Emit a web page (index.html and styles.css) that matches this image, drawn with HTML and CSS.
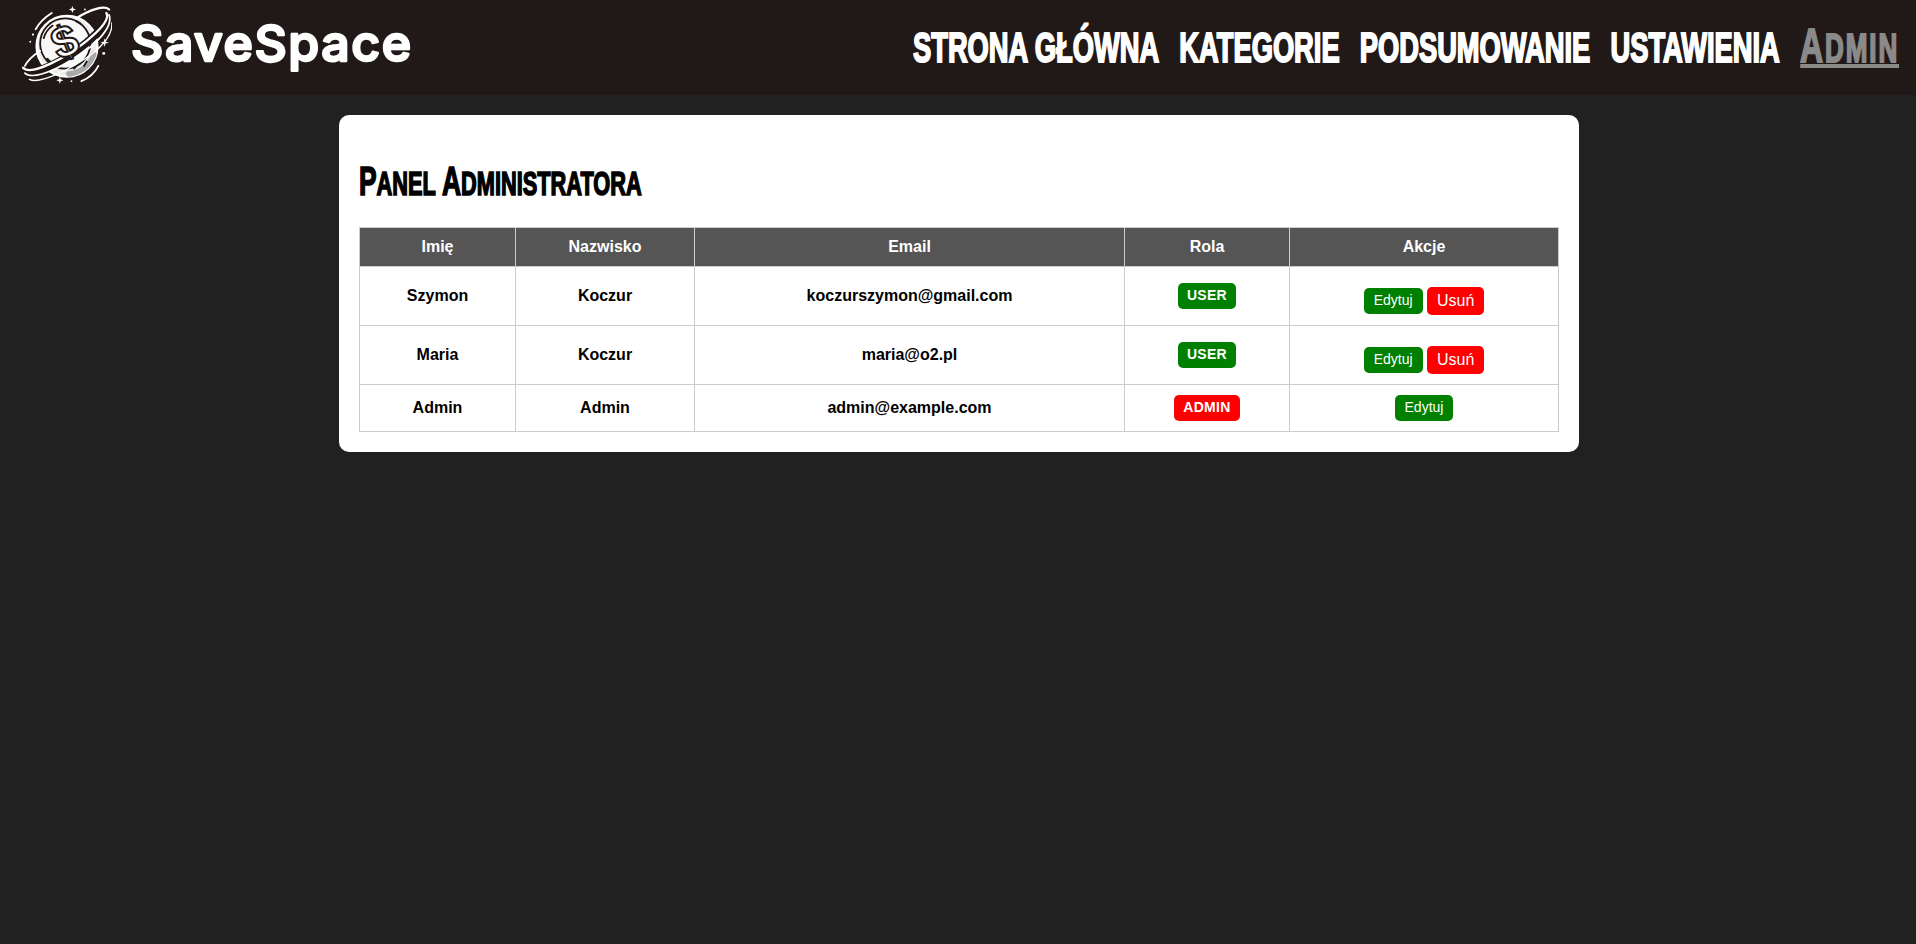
FILE: index.html
```html
<!DOCTYPE html>
<html lang="pl">
<head>
<meta charset="utf-8">
<title>SaveSpace</title>
<link rel="stylesheet" href="styles.css">
</head>
<body>
<header class="topbar">
  <a class="brand" href="#">
    <svg class="logo" viewBox="0 0 100 96" aria-hidden="true">
      <g fill="none" stroke="#fff" stroke-linecap="round">
        <circle cx="50" cy="46" r="34" fill="#ececec" stroke-width="2.5"/>
        <circle cx="48" cy="43" r="28" fill="#f8f8f8" stroke="#1f1716" stroke-width="2"/>
        <path d="M52 77a32 32 0 0 0 28-22" stroke="#a8a8a8" stroke-width="6"/>
        <path d="M58 71l5-6M69 68l3-5" stroke="#1f1716" stroke-width="2"/>
        <path d="M24 37a26 26 0 0 1 10-14M28 60l5 5M60 18l5 3" stroke="#1f1716" stroke-width="2"/>
        <path d="M2 72C12 82 50 60 72 42 88 28 98 18 94 9" stroke="#1f1716" stroke-width="9"/>
        <path d="M60 15C76 5 92 0 97 5" stroke-width="2.5"/>
        <path d="M1 70C10 80 50 58 72 40 88 27 98 16 94 9" stroke-width="2.6"/>
        <path d="M3 76C14 86 54 65 76 47 90 35 101 22 97 11" stroke-width="2"/>
        <path d="M8 83C20 89 56 71 80 53 92 43 101 31 100 20" stroke-width="1.5"/>
        <path d="M3 68C6 62 14 55 20 51" stroke-width="2"/>
        <path d="M15 27C19 20 25 14 33 9" stroke-width="2"/>
        <path d="M85 68C81 76 74 82 66 85" stroke-width="2"/>
      </g>
      <text class="logo-dollar" x="48" y="58" transform="rotate(-22 48 42)">$</text>
      <g fill="#fff">
        <path d="M56 1l1 3 3 1-3 1-1 3-1-3-3-1 3-1zM92 37l1 4 4 1-4 1-1 4-1-4-4-1 4-1zM42 80l1 3 3 1-3 1-1 3-1-3-3-1 3-1z"/>
        <circle cx="91" cy="54" r="1.6"/><circle cx="12" cy="33" r="1.2"/><circle cx="9" cy="41" r="1"/><circle cx="55" cy="85" r="1"/><circle cx="70" cy="5" r="1"/>
      </g>
    </svg>
    <svg class="brand-mark" viewBox="0 0 290 70" role="img" aria-label="SaveSpace">
      <text class="brand-name" x="2" y="48">SaveSpace</text>
    </svg>
  </a>
  <nav class="nav">
    <a href="#">Strona główna</a>
    <a href="#">Kategorie</a>
    <a href="#">Podsumowanie</a>
    <a href="#">Ustawienia</a>
    <a href="#" class="nav-active">Admin</a>
  </nav>
</header>
<main class="card">
  <h2 class="title"><span class="word">Panel</span> <span class="word">Administratora</span></h2>
  <table class="users">
    <colgroup>
      <col class="c1"><col class="c2"><col class="c3"><col class="c4"><col class="c5">
    </colgroup>
    <thead>
      <tr><th>Imię</th><th>Nazwisko</th><th>Email</th><th>Rola</th><th>Akcje</th></tr>
    </thead>
    <tbody>
      <tr class="tall">
        <td>Szymon</td><td>Koczur</td><td>koczurszymon@gmail.com</td>
        <td><span class="badge green">USER</span></td>
        <td class="actions"><a class="btn green" href="#">Edytuj</a> <button class="del" type="button">Usuń</button></td>
      </tr>
      <tr class="tall">
        <td>Maria</td><td>Koczur</td><td>maria@o2.pl</td>
        <td><span class="badge green">USER</span></td>
        <td class="actions"><a class="btn green" href="#">Edytuj</a> <button class="del" type="button">Usuń</button></td>
      </tr>
      <tr>
        <td>Admin</td><td>Admin</td><td>admin@example.com</td>
        <td><span class="badge red">ADMIN</span></td>
        <td><a class="btn green" href="#">Edytuj</a></td>
      </tr>
    </tbody>
  </table>
</main>
</body>
</html>
```
FILE: styles.css
```css
* { box-sizing: border-box; }
html, body { margin: 0; height: 100%; }
body {
  background: #212121;
  font-family: "Liberation Sans", Arial, sans-serif;
  color: #000;
}
a { text-decoration: none; }
.topbar {
  height: 95px;
  background: #211918;
  display: flex;
  align-items: center;
  justify-content: space-between;
  padding: 0 17px 0 22px;
  overflow: hidden;
}
.brand { display: flex; flex: none; align-items: center; gap: 17px; color: #fff; }
.logo { width: 90px; height: 86px; display: block; }
.logo-dollar {
  font: 700 50px "Liberation Sans", sans-serif;
  fill: #fff;
  stroke: #1f1716;
  stroke-width: 2.2px;
  text-anchor: middle;
}
.brand-mark { width: 290px; height: 70px; display: block; }
.brand-name {
  font: 500 50px "Inter", sans-serif;
  letter-spacing: 1.6px;
  fill: #fff;
  stroke: #fff;
  stroke-width: 2.5px;
  stroke-linejoin: round;
}
.nav {
  display: flex;
  flex: none;
  margin-left: -400px;
  gap: 31px;
  align-items: baseline;
  transform: scaleX(.65);
  transform-origin: right center;
  white-space: nowrap;
}
.nav a {
  font: 700 42px "Liberation Sans", sans-serif;
  -webkit-text-stroke: 2px currentColor;
  text-transform: uppercase;
  color: #fff;
  line-height: 1;
}
.nav .nav-active {
  color: #8a8a8a;
  font-size: 40px;
  line-height: 32px;
  letter-spacing: 3px;
  border-bottom: 4px solid #8a8a8a;
}
.nav .nav-active::first-letter { font-size: 49px; }
.card {
  width: 1240px;
  margin: 20px 0 0 339px;
  padding: 20px;
  background: #fff;
  border-radius: 10px;
}
.title {
  height: 44px;
  margin: 24px 0 24px;
  font: 700 33px/44px "Liberation Sans", sans-serif;
  text-transform: uppercase;
  -webkit-text-stroke: 1.6px #000;
  transform: scaleX(.66);
  transform-origin: left center;
  white-space: nowrap;
}
.word { display: inline-block; height: 44px; }
.word::first-letter { font-size: 40px; }
.users {
  width: 1199px;
  table-layout: fixed;
  border-collapse: collapse;
  text-align: center;
  font-size: 16px;
  font-weight: 700;
}
.c1 { width: 156px; }
.c2 { width: 179px; }
.c3 { width: 430px; }
.c4 { width: 165px; }
.c5 { width: 269px; }
.users th, .users td { border: 1px solid #ccc; }
.users th { background: #555; color: #fff; height: 39px; padding: 0 10px; }
.users td { height: 47px; padding: 0 10px; }
.users .tall td { height: 59px; }
.users .actions { padding-top: 9px; }
.badge {
  display: inline-block;
  padding: 5px 9px 6px;
  border-radius: 5px;
  color: #fff;
  font-size: 14px;
  line-height: 15px;
  letter-spacing: .3px;
}
.btn {
  display: inline-block;
  vertical-align: middle;
  padding: 5px 10px 6px;
  border-radius: 5px;
  color: #fff;
  font-size: 14px;
  font-weight: 400;
  line-height: 15px;
}
.green { background: #008000; }
.red { background: #f00; }
.del {
  vertical-align: middle;
  border: 0;
  border-radius: 5px;
  background: #f00;
  color: #fff;
  font: 400 16px/18px "Liberation Sans", sans-serif;
  padding: 5px 10px;
}
```
